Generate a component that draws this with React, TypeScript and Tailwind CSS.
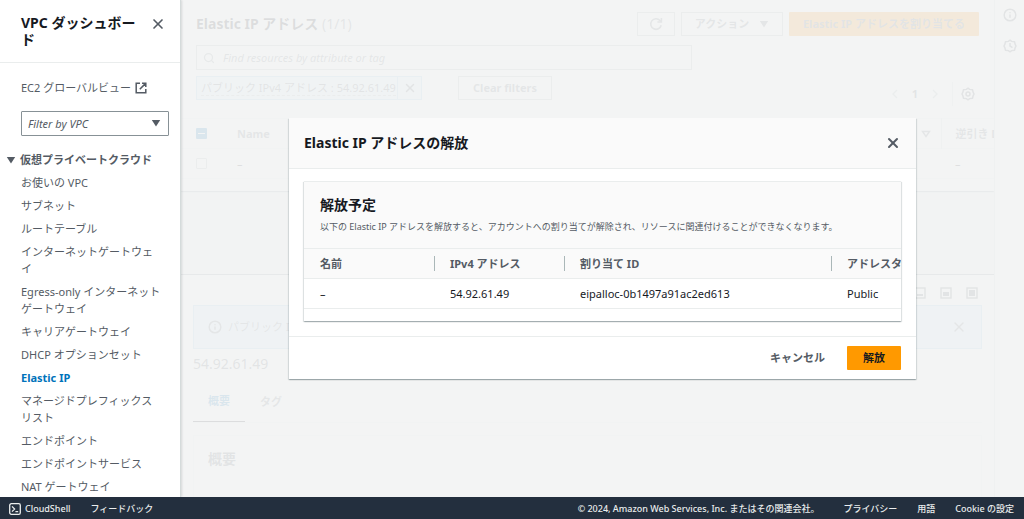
import { useState } from 'react'
import type { ReactNode } from 'react'
import { Info, Search, X } from 'lucide-react'
import clsx from 'clsx'

const navLinks = [
  'お使いの VPC',
  'サブネット',
  'ルートテーブル',
  'インターネットゲートウェイ',
  'Egress-only インターネットゲートウェイ',
  'キャリアゲートウェイ',
  'DHCP オプションセット',
  'Elastic IP',
  'マネージドプレフィックスリスト',
  'エンドポイント',
  'エンドポイントサービス',
  'NAT ゲートウェイ',
]

const releaseRows = [
  { name: '–', ip: '54.92.61.49', allocationId: 'eipalloc-0b1497a91ac2ed613', type: 'Public' },
]

const cardShadow =
  'shadow-[0_1px_1px_rgba(0,28,36,0.2),1px_1px_1px_rgba(0,28,36,0.1),-1px_1px_1px_rgba(0,28,36,0.1)]'

function Caret({ className }: { className?: string }) {
  return (
    <svg viewBox="0 0 10 8" className={clsx('h-2 w-2.5 shrink-0', className)} fill="currentColor" aria-hidden="true">
      <path d="M0.8 1h8.4L5 7.4z" />
    </svg>
  )
}

function ExternalIcon() {
  return (
    <svg viewBox="0 0 12 12" className="size-3" fill="none" stroke="currentColor" strokeWidth="1.5" aria-hidden="true">
      <path d="M5 1.2H1.2v9.6h9.6V7M7 1.2h3.8V5M10.6 1.4 4.8 7.2" />
    </svg>
  )
}

function HexIcon({ children }: { children: ReactNode }) {
  return (
    <svg viewBox="0 0 14 14" className="size-3.5" fill="none" stroke="currentColor" strokeWidth="1.5" aria-hidden="true">
      <path d="M7 1.2 8.6 2.4l2.9.4.7 2.6L13 7l-.8 1.6-.7 2.6-2.9.4L7 12.8l-1.6-1.2-2.9-.4-.7-2.6L1 7l.8-1.6.7-2.6 2.9-.4z" />
      {children}
    </svg>
  )
}

function RefreshIcon() {
  return (
    <svg viewBox="0 0 14 14" className="size-3.5" fill="none" stroke="currentColor" strokeWidth="1.6" aria-hidden="true">
      <path d="M12.2 8.2A5.3 5.3 0 1 1 11 3.5l1.2 1.3" />
      <path d="M12.4 1v4h-4" />
    </svg>
  )
}

function PanelSizeIcon({ y, height }: { y: number; height: number }) {
  return (
    <svg viewBox="0 0 12 12" className="size-3" aria-hidden="true">
      <rect x="1" y="1" width="10" height="10" fill="none" stroke="currentColor" strokeWidth="1.4" />
      <rect x="3" y={y} width="6" height={height} fill="currentColor" />
    </svg>
  )
}

function SideNav() {
  return (
    <aside className="z-10 w-[181px] shrink-0 overflow-hidden border-r border-[#d5dbdb] bg-white shadow-[1px_0_2px_rgba(0,28,36,0.12)]">
      <div className="flex items-start justify-between border-b border-[#eaeded] pt-3.5 pr-3.5 pb-3.5 pl-[21px]">
        <h2 className="w-[124px] text-[14px] leading-[17px] font-bold text-[#16191f]">VPC ダッシュボード</h2>
        <button type="button" aria-label="ナビゲーションを閉じる" className="pt-0.5 text-[#545b64]">
          <X className="size-4" strokeWidth={2.5} />
        </button>
      </div>

      <div className="pt-4 pr-[11px] pl-[21px] text-[#545b64]">
        <a href="#ec2-global" className="flex items-center gap-1 leading-[17px]">
          EC2 グローバルビュー
          <ExternalIcon />
        </a>
        <div className="relative mt-[15px]">
          <select
            aria-label="Filter by VPC"
            className="h-[25px] w-full appearance-none rounded-[1px] border border-[#879196] bg-white px-1.5 text-[11px] text-[#545b64] italic"
          >
            <option>Filter by VPC</option>
          </select>
          <Caret className="pointer-events-none absolute top-2 right-2" />
        </div>
      </div>

      <nav className="mt-[15px] text-[#545b64]">
        <button type="button" className="flex items-center gap-1 pl-1.5 leading-[17px] font-bold">
          <Caret />
          仮想プライベートクラウド
        </button>
        <ul className="mt-1.5 flex flex-col gap-1.5 pr-[18px] pl-[21px] leading-[17px]">
          {navLinks.map((name) => (
            <li key={name}>
              <a href={`#${name}`} className={clsx('block', name === 'Elastic IP' && 'font-bold text-[#0073bb]')}>
                {name}
              </a>
            </li>
          ))}
        </ul>
      </nav>
    </aside>
  )
}

function AddressList() {
  return (
    <section className={clsx('shrink-0 bg-white pb-3', cardShadow)}>
      <div className="flex items-center justify-between px-[15px] pt-3">
        <h1 className="text-[14px] font-bold">
          Elastic IP アドレス <span className="font-normal text-[#687078]">(1/1)</span>
        </h1>
        <div className="flex gap-1.5 font-bold text-[#687078]">
          <button type="button" aria-label="更新" className="flex h-6 w-[38px] items-center justify-center border border-[#aab7b8]">
            <RefreshIcon />
          </button>
          <button type="button" className="flex h-6 w-[102px] items-center justify-center gap-2.5 border border-[#aab7b8]">
            アクション
            <Caret />
          </button>
          <button type="button" className="h-6 w-[190px] rounded-[1px] bg-[#ff9000] text-[#545b64]">
            Elastic IP アドレスを割り当てる
          </button>
        </div>
      </div>

      <div className="px-[15px] pt-[9px]">
        <label className="flex h-[25px] w-[496px] items-center gap-2 border border-[#aab7b8] px-1.5 text-[#879196]">
          <Search className="size-3" strokeWidth={2.5} />
          <input
            type="text"
            aria-label="リソースの検索"
            placeholder="Find resources by attribute or tag"
            className="min-w-0 flex-1 italic outline-none placeholder:text-[#687078]"
          />
        </label>
        <div className="flex pt-1.5">
          <div className="flex h-6 w-[226px] items-center justify-between border border-[#99c7e4] bg-[#e1f2ff] pl-1 text-[#545b64]">
            <span className="border-b border-dashed border-[#aab7b8] leading-[15px] whitespace-nowrap">
              パブリック IPv4 アドレス : 54.92.61.49
            </span>
            <button type="button" aria-label="フィルターを削除" className="flex h-full w-6 items-center justify-center border-l border-[#99c7e4]">
              <X className="size-3.5" strokeWidth={2.5} />
            </button>
          </div>
          <button type="button" className="ml-9 h-6 w-[94px] border border-[#aab7b8] font-bold text-[#687078]">
            Clear filters
          </button>
          <div className="mt-1.5 ml-auto flex h-6 items-center text-[#545b64]">
            <button type="button" aria-label="前のページ" className="px-2 text-[#aab7b8]">
              <svg viewBox="0 0 6 10" className="h-2.5 w-1.5" fill="none" stroke="currentColor" strokeWidth="1.4">
                <path d="M5 1 1 5l4 4" />
              </svg>
            </button>
            <span className="px-1.5 font-bold">1</span>
            <button type="button" aria-label="次のページ" className="mr-1.5 px-2 text-[#aab7b8]">
              <svg viewBox="0 0 6 10" className="h-2.5 w-1.5" fill="none" stroke="currentColor" strokeWidth="1.4">
                <path d="m1 1 4 4-4 4" />
              </svg>
            </button>
            <button type="button" aria-label="設定" className="flex h-full items-center border-l border-[#d5dbdb] pr-1 pl-2">
              <HexIcon>
                <circle cx="7" cy="7" r="2" />
              </HexIcon>
            </button>
          </div>
        </div>
      </div>

      <table className="mt-3 w-full table-fixed border-t border-[#eaeded] text-left">
        <thead className="bg-[#fafafa] text-[#687078]">
          <tr className="h-[30px] border-b border-[#eaeded]">
            <th className="w-[41px] pl-[15px]">
              <label className="relative block size-[11px]">
                <input type="checkbox" aria-label="すべて選択" className="block size-[11px] appearance-none rounded-[1px] bg-[#0073bb]" />
                <span className="absolute top-[5px] left-0.5 h-px w-[7px] bg-white" />
              </label>
            </th>
            <th className="pl-[15px]">Name</th>
            <th className="w-[30px] border-r border-[#d5dbdb]">
              <svg viewBox="0 0 10 8" className="ml-2.5 h-2 w-2.5" fill="none" stroke="currentColor" strokeWidth="1.4">
                <path d="M1.5 1.5h7L5 6.5z" />
              </svg>
            </th>
            <th className="w-[53px] overflow-hidden pl-3.5 whitespace-nowrap">逆引き DNS</th>
          </tr>
        </thead>
        <tbody>
          <tr className="h-[30px] border-b border-[#eaeded]">
            <td className="pl-[15px]">
              <input type="checkbox" aria-label="選択" className="block size-[11px] appearance-none rounded-[1px] border border-[#aab7b8]" />
            </td>
            <td className="pl-[15px]">–</td>
            <td />
            <td className="pl-3.5">–</td>
          </tr>
        </tbody>
      </table>
    </section>
  )
}

function DetailPanel() {
  return (
    <section className="mt-[83px] flex-1 border-t border-[#879196] bg-white px-3 pt-3">
      <div className="flex justify-end gap-3.5 pr-1 text-[#545b64]">
        <button type="button" aria-label="小">
          <PanelSizeIcon y={7} height={2} />
        </button>
        <button type="button" aria-label="中">
          <PanelSizeIcon y={5} height={4} />
        </button>
        <button type="button" aria-label="大">
          <PanelSizeIcon y={3} height={6} />
        </button>
      </div>
      <div className="mt-1.5 flex h-11 items-center gap-1.5 border border-[#99c7e4] bg-[#d5ebff] px-3.5 text-[#687078]">
        <Info className="size-3.5" strokeWidth={2.5} />
        <span>パブリック IP</span>
        <button type="button" aria-label="閉じる" className="ml-auto">
          <X className="size-4" strokeWidth={2} />
        </button>
      </div>
      <h2 className="mt-1.5 text-[14px] leading-[18px] text-[#545b64]">54.92.61.49</h2>
      <div role="tablist" className="mt-2 flex h-[42px] items-stretch border-b border-[#eaeded] font-bold text-[#687078]">
        <button type="button" role="tab" aria-selected="true" className="w-[52px] border-b border-[#16191f] text-[#0073bb]">
          概要
        </button>
        <button type="button" role="tab" aria-selected="false" className="w-[52px]">
          タグ
        </button>
      </div>
      <div className="mt-3 h-20 border border-[#eaeded] px-3.5 pt-3.5">
        <h3 className="text-[14px] leading-[18px] font-bold text-[#545b64]">概要</h3>
      </div>
    </section>
  )
}

function ReleaseDialog({ onClose }: { onClose: () => void }) {
  return (
    <div
      role="dialog"
      aria-modal="true"
      aria-labelledby="release-title"
      className={clsx('w-[627px] max-w-full bg-white', cardShadow)}
    >
      <header className="flex h-[51px] items-center justify-between border-b border-[#eaeded] bg-[#fafafa] px-[15px]">
        <h2 id="release-title" className="text-[14px] font-bold">
          Elastic IP アドレスの解放
        </h2>
        <button type="button" aria-label="閉じる" onClick={onClose} className="text-[#545b64]">
          <X className="size-4" strokeWidth={3} />
        </button>
      </header>

      <div className="px-[15px] pt-3 pb-[15px]">
        <div className={clsx('overflow-hidden border-t border-[#eaeded] bg-white pb-3', cardShadow)}>
          <div className="bg-[#fafafa] px-4 py-3.5">
            <h3 className="text-[14px] leading-[18px] font-bold">解放予定</h3>
            <p className="mt-1.5 text-[9px] leading-[14px] whitespace-nowrap text-[#545b64]">
              以下の Elastic IP アドレスを解放すると、アカウントへの割り当てが解除され、リソースに関連付けることができなくなります。
            </p>
          </div>
          <table className="w-[640px] table-fixed text-left">
            <thead className="border-y border-[#eaeded] bg-[#fafafa] text-[#545b64]">
              <tr className="h-[30px]">
                {['w-[131px]', 'w-[130px]', 'w-[267px]', 'w-[112px]'].map((width, i) => (
                  <th key={i} className={clsx('p-0', width)}>
                    <div
                      className={clsx(
                        'h-[15px] leading-[15px]',
                        i === 0 ? 'pl-4' : 'pl-[15px]',
                        i < 3 && 'border-r border-[#aab7b8]'
                      )}
                    >
                      {['名前', 'IPv4 アドレス', '割り当て ID', 'アドレスタイプ'][i]}
                    </div>
                  </th>
                ))}
              </tr>
            </thead>
            <tbody>
              {releaseRows.map((row) => (
                <tr key={row.allocationId} className="h-[30px] border-b border-[#eaeded]">
                  <td className="pl-4">{row.name}</td>
                  <td className="pl-[15px]">{row.ip}</td>
                  <td className="pl-[15px]">{row.allocationId}</td>
                  <td className="pl-[15px]">{row.type}</td>
                </tr>
              ))}
            </tbody>
          </table>
        </div>
      </div>

      <footer className="flex justify-end gap-[22px] border-t border-[#eaeded] px-[15px] py-[9px] font-bold">
        <button type="button" onClick={onClose} className="text-[#545b64]">
          キャンセル
        </button>
        <button type="button" onClick={onClose} className="h-6 w-[54px] rounded-[1px] bg-[#ff9900] text-[#16191f]">
          解放
        </button>
      </footer>
    </div>
  )
}

function ConsoleFooter() {
  return (
    <footer className="z-20 flex h-[22px] shrink-0 items-center bg-[#232f3e] pr-2.5 pl-[9px] pt-0.5 text-[9px] font-medium text-[#eaeded]">
      <button type="button" className="flex items-center gap-1">
        <svg viewBox="0 0 12 12" className="size-3" fill="none" stroke="currentColor" strokeWidth="1.3" aria-hidden="true">
          <rect x="0.7" y="0.7" width="10.6" height="10.6" rx="1.6" />
          <path d="M3 3.4 5.6 6 3 8.6M6.4 8.6h2.8" />
        </svg>
        CloudShell
      </button>
      <a href="#feedback" className="ml-5">
        フィードバック
      </a>
      <span className="ml-auto">© 2024, Amazon Web Services, Inc. またはその関連会社。</span>
      <a href="#privacy" className="ml-6">
        プライバシー
      </a>
      <a href="#terms" className="ml-5">
        用語
      </a>
      <a href="#cookies" className="ml-5">
        Cookie の設定
      </a>
    </footer>
  )
}

export default function App() {
  const [dialogOpen, setDialogOpen] = useState(true)

  return (
    <div className="flex h-screen flex-col overflow-hidden bg-[#f2f3f3] font-['Noto_Sans','Noto_Sans_CJK_JP',sans-serif] text-[11px] leading-4 text-[#16191f]">
      <div className="flex min-h-0 flex-1">
        <SideNav />
        <main className="relative flex min-w-0 flex-1 overflow-hidden">
          <div className="flex min-w-0 flex-1 flex-col">
            <AddressList />
            <DetailPanel />
          </div>
          <aside className="flex w-[30px] shrink-0 flex-col items-center gap-[17px] border-l border-[#d5dbdb] bg-white pt-2 text-[#545b64]">
            <button type="button" aria-label="情報">
              <Info className="size-3.5" strokeWidth={2.5} />
            </button>
            <button type="button" aria-label="履歴">
              <HexIcon>
                <path d="M7 4v3l2.5 1.6" />
              </HexIcon>
            </button>
          </aside>
          {dialogOpen && (
            <div className="absolute inset-0 flex items-center justify-center bg-[#f2f3f3]/90">
              <ReleaseDialog onClose={() => setDialogOpen(false)} />
            </div>
          )}
        </main>
      </div>
      <ConsoleFooter />
    </div>
  )
}
